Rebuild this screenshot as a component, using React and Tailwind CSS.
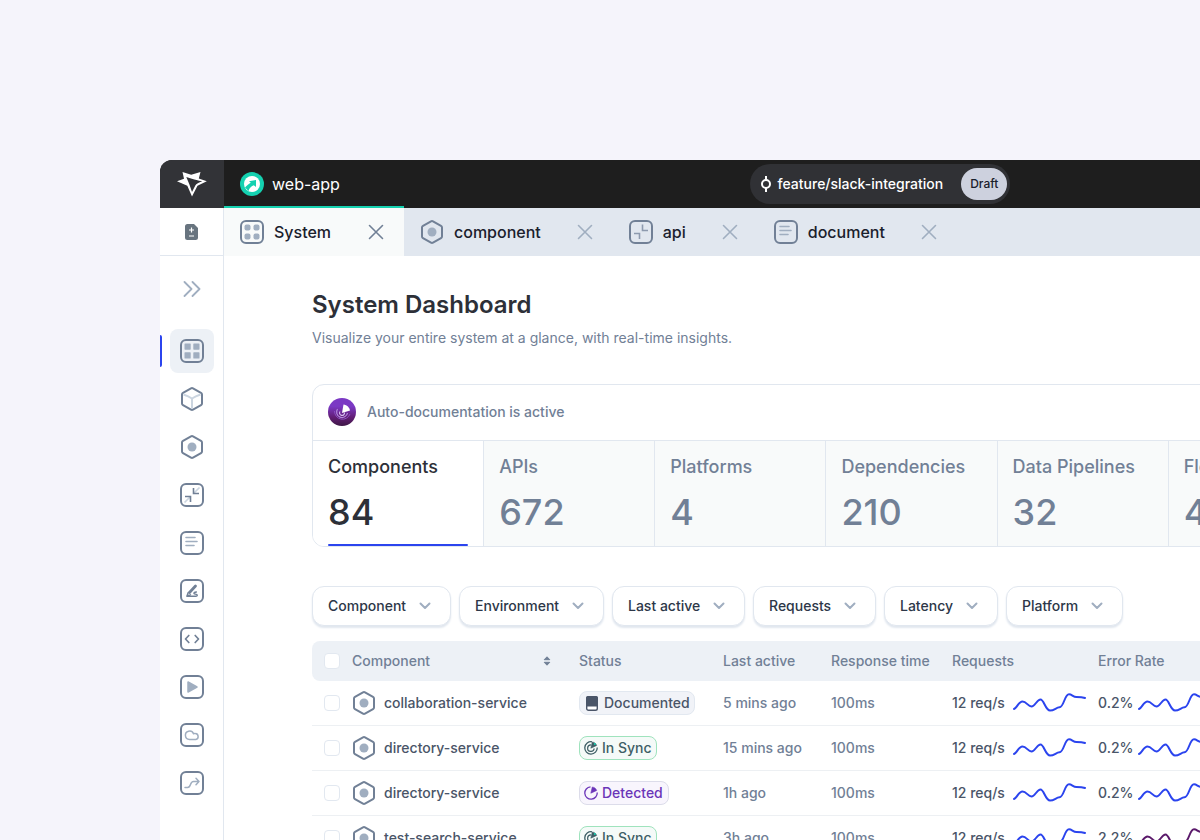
import React from 'react'

const tabs = [
  { label: 'System', icon: 'apps', active: true },
  { label: 'component', icon: 'component' },
  { label: 'api', icon: 'api' },
  { label: 'document', icon: 'document' },
]

const navItems = ['grid', 'cube', 'component', 'merge', 'document', 'edit', 'code', 'play', 'cloud', 'flow']

const stats = [
  { label: 'Components', value: '84', active: true },
  { label: 'APIs', value: '672' },
  { label: 'Platforms', value: '4' },
  { label: 'Dependencies', value: '210' },
  { label: 'Data Pipelines', value: '32' },
  { label: 'Flows', value: '48' },
]

const filters = ['Component', 'Environment', 'Last active', 'Requests', 'Latency', 'Platform']

const rows = [
  { name: 'collaboration-service', status: 'Documented', last: '5 mins ago', error: '0.2%' },
  { name: 'directory-service', status: 'In Sync', last: '15 mins ago', error: '0.2%' },
  { name: 'directory-service', status: 'Detected', last: '1h ago', error: '0.2%' },
  { name: 'test-search-service', status: 'In Sync', last: '3h ago', error: '2.2%', high: true },
]

const Hexagon = () => (
  <path
    d="M11 1.400a2 2 0 0 1 2 0l8 4.500a2 2 0 0 1 1 1.700v8.800a2 2 0 0 1-1 1.700l-8 4.500a2 2 0 0 1-2 0l-8-4.500a2 2 0 0 1-1-1.700V7.600a2 2 0 0 1 1-1.700z"
    stroke="#718096"
    strokeWidth="2"
  />
)

const Frame = () => <rect x="1" y="1" width="22" height="22" rx="5" stroke="#718096" strokeWidth="2" />

function Icon({ name }) {
  return (
    <svg width="24" height="24" viewBox="0 0 24 24" fill="none" className="shrink-0" aria-hidden="true">
      {name === 'component' || name === 'cube' ? <Hexagon /> : <Frame />}
      {name === 'apps' && (
        <g fill="#a0aec0">
          <rect x="4.500" y="4.500" width="6" height="6" rx="2" />
          <rect x="13.500" y="4.500" width="6" height="6" rx="2" />
          <rect x="4.500" y="13.500" width="6" height="6" rx="2" />
          <rect x="13.500" y="13.500" width="6" height="6" rx="2" />
        </g>
      )}
      {name === 'grid' && (
        <g fill="#a0aec0">
          <rect x="4.500" y="4.500" width="6.200" height="6.200" rx="0.600" />
          <rect x="13.300" y="4.500" width="6.200" height="6.200" rx="0.600" />
          <rect x="4.500" y="13.300" width="6.200" height="6.200" rx="0.600" />
          <rect x="13.300" y="13.300" width="6.200" height="6.200" rx="0.600" />
        </g>
      )}
      {name === 'component' && <circle cx="12" cy="12" r="4.500" fill="#a0aec0" />}
      {name === 'cube' && <path d="M3.500 7.500c3 1 5.500 2 8.500 4 3-2 5.500-3 8.500-4M12 11.500v10.500" stroke="#cbd5e0" strokeWidth="2" />}
      {name === 'api' && (
        <path d="M13.500 4.500v6H19M5 13.500h5.500V19" stroke="#8d9aae" strokeWidth="1.600" />
      )}
      {name === 'merge' && (
        <g strokeWidth="1.600">
          <path d="M19.500 4.500l-5.500 5.500M4.500 19.500l5.500-5.500" stroke="#cbd5e0" />
          <path d="M13.500 5v5.500H19M5 13.500h5.500V19" stroke="#718096" />
        </g>
      )}
      {name === 'document' && (
        <path d="M6 6.500h9M6 10.500h11M6 14.500h8" stroke="#a0aec0" strokeWidth="1.600" strokeLinecap="round" />
      )}
      {name === 'edit' && (
        <g stroke="#718096" strokeLinecap="round" strokeLinejoin="round">
          <path d="M9.500 13.500l6-6.500" strokeWidth="2.800" />
          <path d="M8.200 13.500L7 17l3.500-1.200" strokeWidth="1.400" />
          <path d="M7 17.300h9c1.500 0 1.800-1.600 .4-1.900l-2-.5c-1-.6-.3-1.900 2-1.900" strokeWidth="1.400" />
        </g>
      )}
      {name === 'code' && (
        <path d="M8.800 8.500L5.500 12l3.300 3.500M15.200 8.500l3.300 3.500-3.300 3.500" stroke="#718096" strokeWidth="1.700" strokeLinecap="round" strokeLinejoin="round" />
      )}
      {name === 'play' && (
        <path d="M8 7v10l9-5z" fill="#a0aec0" stroke="#a0aec0" strokeWidth="1.500" strokeLinejoin="round" />
      )}
      {name === 'cloud' && (
        <path d="M9.500 16.500a4.200 4.200 0 1 1 4-5.800c.6-.3 1.300-.3 2-.1a3 3 0 0 1 .3 5.900z" stroke="#a0aec0" strokeWidth="1.500" />
      )}
      {name === 'flow' && (
        <path d="M5 16.500h2.500c4 0 2-6 6-6H19M16 7.300l3 3.200-3 3.200" stroke="#a0aec0" strokeWidth="1.500" strokeLinecap="round" strokeLinejoin="round" />
      )}
    </svg>
  )
}

function Sparkline({ high }) {
  return (
    <svg width="73" height="20" viewBox="0 0 73 20" fill="none" className="shrink-0" aria-hidden="true">
      <path
        d="M1 16C4 15 5.500 8.500 9.500 8.500s5.500 5 9 5 5.500-7 9-7 5 11 9.500 11 6-3 9.500-3.200C51 14 51.500 1.300 56 1.300c3 0 4 2.700 7.500 2.700 3 0 5.500 0 8.500 1"
        stroke={high ? '#5b1a6b' : '#2b44ee'}
        strokeWidth="2"
        strokeLinecap="round"
      />
    </svg>
  )
}

function Radar({ full }) {
  return (
    <svg width="14" height="14" viewBox="0 0 14 14" fill="none" aria-hidden="true">
      <path
        d={full ? 'M8 .8A6.200 6.200 0 1 0 13.200 6.500' : 'M6.500 .8A6.200 6.200 0 1 0 13.200 6.500'}
        stroke="currentColor"
        strokeWidth="1.300"
      />
      {full && <path d="M7 3.800A3.300 3.300 0 1 0 10.200 7.500" stroke="currentColor" strokeWidth="1.200" />}
      <path d="M6.800 7.200L8.300 1c2 .3 3.700 1.500 4.400 3.500z" fill="currentColor" stroke="currentColor" strokeWidth="0.600" strokeLinejoin="round" />
      {full && <circle cx="10.800" cy="3" r="1" fill="#15d1b0" />}
    </svg>
  )
}

function StatusBadge({ status }) {
  if (status === 'Documented') {
    return (
      <span className="inline-flex h-6 items-center gap-1.5 rounded-lg border border-[#e2e8f0] bg-[#f1f3f8] pl-1.5 pr-1 text-[#4a5568]">
        <svg width="12" height="15" viewBox="0 0 12 15" fill="none" aria-hidden="true">
          <rect x="0.700" y="0.700" width="10.600" height="13.600" rx="1.800" fill="#fff" stroke="currentColor" strokeWidth="1.400" />
          <path d="M0 2a2 2 0 0 1 2-2h8a2 2 0 0 1 2 2v8.500H0z" fill="currentColor" />
        </svg>
        {status}
      </span>
    )
  }
  if (status === 'In Sync') {
    return (
      <span className="inline-flex h-6 items-center gap-1 rounded-lg border border-[#9fe3bd] bg-[#f5faf8] px-1 text-[#3f5f66]">
        <Radar full />
        {status}
      </span>
    )
  }
  return (
    <span className="inline-flex h-6 items-center gap-1 rounded-lg border border-[#dcdcea] bg-[#f8f5fd] pl-1 pr-[5px] text-[#6b35b8]">
      <Radar />
      {status}
    </span>
  )
}

function Checkbox({ label }) {
  return (
    <input
      type="checkbox"
      aria-label={label}
      className="block h-4 w-4 appearance-none rounded border border-[#e2e8f0] bg-white checked:bg-[#2b44ee]"
    />
  )
}

function Header() {
  return (
    <header className="flex h-12 shrink-0 bg-[#1e1e1e]">
      <div className="flex flex-1">
        <a href="#home" aria-label="Home" className="flex w-16 items-center justify-center bg-[#323337]">
          <svg width="30" height="25" viewBox="0 0 30 25" fill="none" aria-hidden="true">
            <path d="M0 9.300L7 6.700 5.500 0l8.700 2.800L23.500 0l-1.700 6.500 8 2.800-9.300 4.400L15 24.500l-4.700-10.800z" fill="#fff" />
            <path d="M9.300 5l6.300 2c2.200.8 5 1.400 9.700 2.200-3.700 1.300-6 2.500-7 4.300L15 20l-2.500-7.200z" fill="#323337" />
          </svg>
        </a>
        <a href="#web-app" className="flex w-[180px] items-center gap-2 border-b-2 border-[#15d1b0] px-4 pt-0.5 text-base text-white">
          <svg width="24" height="24" viewBox="0 0 24 24" fill="none" aria-hidden="true">
            <circle cx="12" cy="12" r="12" fill="#15d1b0" />
            <circle cx="12" cy="12" r="8" fill="#fff" />
            <path d="M9 9.200L16 8v7l-2.200-1.800C11.500 14 9.500 15.500 8.500 19L5 15.500c1.500-1.500 3.500-4 5.800-4.800z" fill="#15d1b0" />
          </svg>
          web-app
        </a>
      </div>
      <div className="my-1 flex items-center rounded-full bg-[#303135] pl-3 pr-[3px] text-sm font-medium text-white">
        <svg width="8" height="16" viewBox="0 0 8 16" fill="none" className="mr-2 overflow-visible" aria-hidden="true">
          <circle cx="4" cy="8" r="4" stroke="currentColor" strokeWidth="2" />
          <path d="M4 0v4M4 12v4" stroke="currentColor" strokeWidth="2" />
        </svg>
        feature/slack-integration
        <span className="ml-[18px] flex h-8 items-center rounded-full bg-[#cdd1de] px-[9px] text-xs text-[#1a202c]">Draft</span>
      </div>
      <div className="flex-1" />
    </header>
  )
}

function TabBar() {
  return (
    <div className="flex h-12 bg-[#e1e7ef]">
      {tabs.map((tab) => (
        <div
          key={tab.label}
          className={`flex items-center pl-4 pr-5 ${tab.active ? 'w-[180px] justify-between bg-[#f8fafa] text-[#718096]' : 'gap-9 text-[#a0aec0]'}`}
        >
          <button className="flex items-center gap-2.5 text-base font-medium text-[#1a202c]">
            <Icon name={tab.icon} />
            {tab.label}
          </button>
          <button aria-label={`Close ${tab.label}`}>
            <svg width="16" height="16" viewBox="0 0 16 16" fill="none" className="block" aria-hidden="true">
              <path d="M1.500 1.500l13 13M14.500 1.500l-13 13" stroke="currentColor" strokeWidth="1.600" strokeLinecap="round" />
            </svg>
          </button>
        </div>
      ))}
    </div>
  )
}

function Sidebar() {
  return (
    <aside className="w-16 shrink-0 border-r border-[#e1e7ef] bg-white">
      <button aria-label="Changes" className="flex h-12 w-full items-center justify-center border-b border-[#e1e7ef]">
        <svg width="13" height="16" viewBox="0 0 13 16" fill="none" aria-hidden="true">
          <path d="M2.500 0H9l4 4v9.500a2.500 2.500 0 0 1-2.500 2.500h-8A2.500 2.500 0 0 1 0 13.500v-11A2.500 2.500 0 0 1 2.500 0z" fill="#68747f" />
          <path d="M6.500 3.500v5M4 6h5M4 12h5" stroke="#fff" strokeWidth="1.200" />
        </svg>
      </button>
      <button aria-label="Expand" className="mt-[11px] mb-[18px] flex h-11 w-full items-center justify-center">
        <svg width="18" height="16" viewBox="0 0 18 16" fill="none" aria-hidden="true">
          <path d="M1.500 1l7 7-7 7M9.500 1l7 7-7 7" stroke="#a0aec0" strokeWidth="1.800" strokeLinecap="round" strokeLinejoin="round" />
        </svg>
      </button>
      <nav className="flex flex-col gap-1">
        {navItems.map((item, i) => (
          <div key={item} className="flex items-center">
            <span className={`h-8 w-0.5 rounded-r ${i === 0 ? 'bg-[#2b44ee]' : ''}`} />
            <a
              href={`#${item}`}
              aria-label={item}
              className={`ml-2 flex h-11 w-11 items-center justify-center rounded-lg ${i === 0 ? 'bg-[#edf1f6]' : ''}`}
            >
              <Icon name={item} />
            </a>
          </div>
        ))}
      </nav>
    </aside>
  )
}

function StatsCard() {
  return (
    <section className="mt-9 overflow-hidden rounded-xl border border-[#e1e7ef]">
      <div className="flex h-14 items-center gap-[11px] border-b border-[#e1e7ef] px-[15px] pb-0.5 text-sm font-medium text-[#718096]">
        <svg width="28" height="28" viewBox="0 0 28 28" fill="none" aria-hidden="true">
          <defs>
            <linearGradient id="radar" x1="14" y1="0" x2="14" y2="28" gradientUnits="userSpaceOnUse">
              <stop offset="0.300" stopColor="#7b39c4" />
              <stop offset="0.700" stopColor="#611d72" />
              <stop offset="1" stopColor="#3d1745" />
            </linearGradient>
          </defs>
          <circle cx="14" cy="14" r="14" fill="url(#radar)" />
          <path d="M9.500 11a5.500 5.500 0 1 0 10 4" stroke="#b48be0" strokeWidth="1.200" />
          <path d="M6.500 13a8 8 0 0 0 15.500 3" stroke="#8a4fc0" strokeWidth="1" />
          <path d="M12 13.500a2.500 2.500 0 1 0 4.500 1" stroke="#d5bdf0" strokeWidth="1.200" />
          <path d="M14 15l1.500-8.500c3.500.5 6 3 6.500 6z" fill="#fff" />
        </svg>
        Auto-documentation is active
      </div>
      <div className="grid grid-cols-7">
        {stats.map((stat) => (
          <button
            key={stat.label}
            className={`flex flex-col border-r border-[#e1e7ef] px-[15px] text-left font-medium ${
              stat.active ? 'bg-white text-[#2d3038]' : 'bg-[#f8fafa] text-[#718096]'
            }`}
          >
            <span className="mt-3 text-lg">{stat.label}</span>
            <span className="mt-[11px] text-4xl">{stat.value}</span>
            <span className={`mt-3 h-0.5 w-full rounded-full ${stat.active ? 'bg-[#2b44ee]' : ''}`} />
          </button>
        ))}
      </div>
    </section>
  )
}

function Filters() {
  return (
    <div className="mt-[39px] flex gap-2">
      {filters.map((filter) => (
        <div key={filter} className="relative">
          <select
            aria-label={filter}
            className="block h-10 appearance-none rounded-xl border border-[#e1e7ef] bg-white pr-[43px] pl-[15px] text-sm font-medium text-[#2d3748] shadow-[0_2px_2px_#e1e7ef]"
          >
            <option>{filter}</option>
          </select>
          <svg width="12" height="8" viewBox="0 0 12 8" fill="none" className="pointer-events-none absolute top-4 right-5" aria-hidden="true">
            <path d="M1.500 1.500L6 6l4.500-4.500" stroke="#a0aec0" strokeWidth="2" strokeLinecap="round" strokeLinejoin="round" />
          </svg>
        </div>
      ))}
    </div>
  )
}

function ServicesTable() {
  return (
    <table className="mt-[15px] w-full table-fixed border-separate border-spacing-0 text-left text-sm font-medium text-[#718096]">
      <thead>
        <tr className="h-10 *:bg-[#edf1f6]">
          <th className="w-10 rounded-l-lg pl-3"><Checkbox label="Select all" /></th>
          <th className="w-[227px] font-medium">
            <button className="flex w-[199px] items-center justify-between">
              Component
              <svg width="8" height="10" viewBox="0 0 8 10" aria-hidden="true">
                <path d="M4 .8L6.800 3.700H1.200zM4 9.200L1.200 6.300h5.600z" fill="#718096" stroke="#718096" strokeLinejoin="round" />
              </svg>
            </button>
          </th>
          <th className="w-36 font-medium">Status</th>
          <th className="w-[108px] font-medium">Last active</th>
          <th className="w-[121px] font-medium">Response time</th>
          <th className="w-[146px] font-medium">Requests</th>
          <th className="rounded-r-lg font-medium">Error Rate</th>
        </tr>
      </thead>
      <tbody>
        {rows.map((row, i) => (
          <tr key={i} className="h-[45px] *:border-b *:border-[#edf0f3]">
            <td className="pl-3"><Checkbox label={`Select ${row.name}`} /></td>
            <td>
              <div className="flex items-center gap-2 text-[#4a5568]">
                <Icon name="component" />
                {row.name}
              </div>
            </td>
            <td><div className="flex"><StatusBadge status={row.status} /></div></td>
            <td>{row.last}</td>
            <td>100ms</td>
            <td>
              <div className="flex items-center gap-2 text-[#4a5568]">12 req/s<Sparkline /></div>
            </td>
            <td>
              <div className="flex items-center gap-2 text-[#4a5568]">
                <span className="w-8 whitespace-nowrap">{row.error}</span>
                <Sparkline high={row.high} />
              </div>
            </td>
          </tr>
        ))}
      </tbody>
    </table>
  )
}

export default function App() {
  return (
    <div className="h-screen overflow-hidden bg-[#f5f4fb] pt-40 pl-40 font-['Inter',sans-serif]">
      <div className="flex h-full min-w-[1440px] flex-col overflow-hidden rounded-tl-xl bg-white">
        <Header />
        <div className="flex">
          <Sidebar />
          <div className="flex-1">
            <TabBar />
            <main className="px-[88px] pt-[33px]">
              <h1 className="text-2xl font-semibold text-[#2d3038]">System Dashboard</h1>
              <p className="mt-[7px] text-sm text-[#718096]">Visualize your entire system at a glance, with real-time insights.</p>
              <StatsCard />
              <Filters />
              <ServicesTable />
            </main>
          </div>
        </div>
      </div>
    </div>
  )
}
